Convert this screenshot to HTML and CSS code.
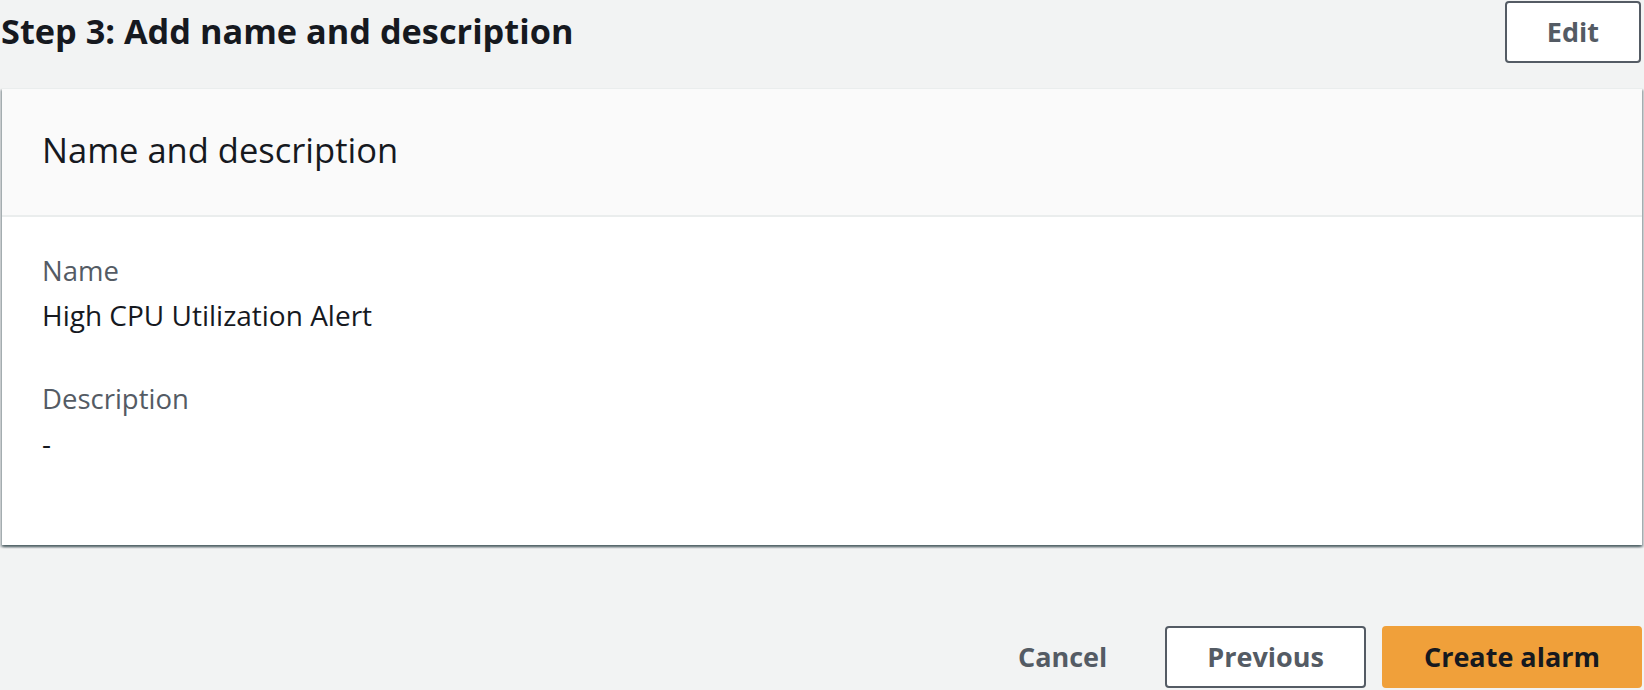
FILE: index.html
```html
<!DOCTYPE html>
<html lang="en">
<head>
<meta charset="utf-8">
<title>Step 3: Add name and description</title>
<link rel="stylesheet" href="styles.css">
</head>
<body>
<div class="page">
  <div class="step-header">
    <h1 class="step-title">Step 3: Add name and description</h1>
    <button class="btn btn-normal edit-btn" type="button">Edit</button>
  </div>
  <section class="card">
    <div class="card-header">
      <h2 class="card-title">Name and description</h2>
    </div>
    <div class="card-body">
      <div class="kv">
        <div class="kv-label">Name</div>
        <div class="kv-value">High CPU Utilization Alert</div>
      </div>
      <div class="kv">
        <div class="kv-label">Description</div>
        <div class="kv-value">-</div>
      </div>
    </div>
  </section>
  <div class="footer">
    <button class="btn btn-link" type="button">Cancel</button>
    <button class="btn btn-normal" type="button">Previous</button>
    <button class="btn btn-primary" type="button">Create alarm</button>
  </div>
</div>
</body>
</html>
```

FILE: styles.css
```css
html, body {
  margin: 0;
  padding: 0;
  background: #f2f3f3;
}

body {
  font-family: "Open Sans", "Liberation Sans", sans-serif;
  color: #16191f;
  overflow: hidden;
}

.page {
  width: 1644px;
  height: 690px;
  display: flex;
  flex-direction: column;
}

.step-header {
  height: 88px;
  display: flex;
  justify-content: space-between;
  align-items: flex-start;
  padding: 0 3px 0 1px;
  box-sizing: border-box;
}

.step-title {
  margin: 0;
  padding-top: 9px;
  font-size: 34.3px;
  line-height: 44px;
  font-weight: 700;
  color: #16191f;
}

.btn {
  box-sizing: border-box;
  height: 62px;
  padding: 0 40px;
  border: 2px solid transparent;
  border-radius: 4px;
  font-family: "Open Sans", "Liberation Sans", sans-serif;
  font-size: 27px;
  font-weight: 700;
  line-height: 58px;
  background: transparent;
  cursor: pointer;
}

.btn-normal {
  background: #ffffff;
  border-color: #545b64;
  color: #545b64;
}

.btn-link {
  color: #545b64;
}

.btn-primary {
  background: #f0a03a;
  border-color: #f0a03a;
  color: #16191f;
}

.edit-btn {
  margin-top: 1px;
}

.card {
  margin: 0 2px;
  background: #ffffff;
  border-top: 1px solid #eaeded;
  box-shadow: 0 2px 2px 0 rgba(0, 28, 36, 0.45),
              2px 2px 2px 0 rgba(0, 28, 36, 0.22),
              -2px 2px 2px 0 rgba(0, 28, 36, 0.22);
}

.card-header {
  background: #fafafa;
  padding: 40px 40px 44px;
  border-bottom: 2px solid #eaeded;
}

.card-title {
  margin: 0;
  font-size: 34.5px;
  line-height: 42px;
  font-weight: 400;
  color: #16191f;
}

.card-body {
  padding: 32px 40px 80px;
  display: flex;
  flex-direction: column;
  gap: 40px;
}

.kv-label {
  font-size: 27.5px;
  line-height: 44px;
  color: #545b64;
}

.kv-value {
  font-size: 28px;
  line-height: 44px;
  color: #16191f;
}

.footer {
  margin-top: 81px;
  display: flex;
  justify-content: flex-end;
  gap: 16px;
  padding-right: 2px;
}
```
